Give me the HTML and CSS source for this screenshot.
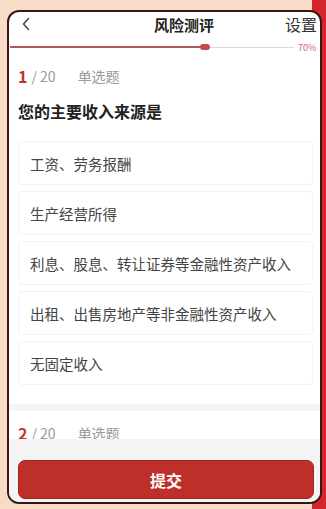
FILE: index.html
```html
<!DOCTYPE html>
<html lang="zh-CN">
<head>
    <meta charset="UTF-8">
    <meta name="viewport" content="width=device-width, initial-scale=1.0">
    <title>风险测评</title>
    <link rel="stylesheet" href="styles.css">
</head>
<body>
    <div class="phone">
        <div class="header">
            <span class="back">
                <svg width="10" height="14" viewBox="0 0 10 14"><path d="M7.5 1.5 L2.5 7 L7.5 12.5" fill="none" stroke="#333" stroke-width="1.3" stroke-linecap="round" stroke-linejoin="round"/></svg>
            </span>
            <span class="title">风险测评</span>
            <span class="setting">设置</span>
        </div>
        <div class="progress">
            <div class="track">
                <div class="done"></div>
                <div class="thumb"></div>
                <div class="rest"></div>
            </div>
            <span class="percent">70%</span>
        </div>

        <div class="content">
            <div class="question">
                <div class="meta"><span class="num">1</span><span class="total">/ 20</span><span class="type">单选题</span></div>
                <div class="q-title">您的主要收入来源是</div>
                <div class="option">工资、劳务报酬</div>
                <div class="option">生产经营所得</div>
                <div class="option">利息、股息、转让证券等金融性资产收入</div>
                <div class="option">出租、出售房地产等非金融性资产收入</div>
                <div class="option">无固定收入</div>
            </div>
            <div class="question">
                <div class="meta"><span class="num">2</span><span class="total">/ 20</span><span class="type">单选题</span></div>
            </div>
        </div>

        <div class="footer">
            <button class="submit">提交</button>
        </div>
    </div>
</body>
</html>
```

FILE: styles.css
```css
body {
    margin: 0;
    height: 509px;
    font-family: "Noto Sans CJK SC", "Noto Sans", sans-serif;
    background: linear-gradient(to right, #f7dcc8 0, #f7dcc8 312px, #d3262c 312px);
    overflow: hidden;
}

.phone {
    margin: 10px 4px 0 7px;
    height: 490px;
    border: 2px solid #3a1612;
    border-radius: 12px;
    background: #fff;
    display: flex;
    flex-direction: column;
    overflow: hidden;
}

.header {
    height: 22px;
    margin-top: 1px;
    display: flex;
    align-items: center;
    justify-content: space-between;
    padding: 0 3px 0 12px;
}

.back {
    width: 40px;
    display: flex;
    align-items: center;
}

.title {
    font-size: 15px;
    font-weight: bold;
    color: #222;
    margin-left: 22px;
}

.setting {
    font-size: 16px;
    color: #333;
}

.progress {
    height: 24px;
    display: flex;
    align-items: center;
    padding-left: 1px;
}

.track {
    flex: 1;
    display: flex;
    align-items: center;
}

.done {
    width: 190px;
    height: 2px;
    background: #b5555a;
}

.thumb {
    width: 10px;
    height: 6px;
    border-radius: 3px;
    background: #c24a4c;
}

.rest {
    flex: 1;
    height: 1px;
    background: #e2d6d6;
    margin-right: 4px;
}

.percent {
    font-size: 9px;
    color: #d06a6a;
    width: 22px;
}

.content {
    flex: 1;
    overflow: hidden;
    background: #f5f5f5;
}

.question {
    background: #fff;
    padding: 0 7px 19px 9px;
    margin-bottom: 7px;
}

.meta {
    height: 34px;
    display: flex;
    align-items: center;
    font-size: 14px;
    color: #999;
}

.question + .question .meta {
    padding-top: 5px;
}

.num {
    color: #c0342f;
    font-size: 16px;
    font-weight: bold;
    margin-right: 4px;
}

.total {
    margin-right: 22px;
}

.q-title {
    height: 36px;
    line-height: 36px;
    font-size: 16px;
    font-weight: bold;
    color: #222;
    margin-bottom: 12px;
}

.option {
    height: 44px;
    line-height: 44px;
    margin-bottom: 6px;
    padding-left: 11px;
    border: 1px solid #f3f3f3;
    border-radius: 4px;
    box-sizing: border-box;
    font-size: 14.5px;
    color: #444;
}

.option:last-child {
    margin-bottom: 0;
}

.footer {
    height: 63px;
    background: #f4f4f4;
    padding: 21px 6px 0 9px;
    box-sizing: border-box;
}

.submit {
    width: 100%;
    height: 39px;
    border: 1px solid #a8241f;
    border-radius: 7px;
    background: #bf2f2a;
    color: #fff;
    font-family: "Noto Sans CJK SC", sans-serif;
    font-size: 16px;
    font-weight: bold;
}
```
